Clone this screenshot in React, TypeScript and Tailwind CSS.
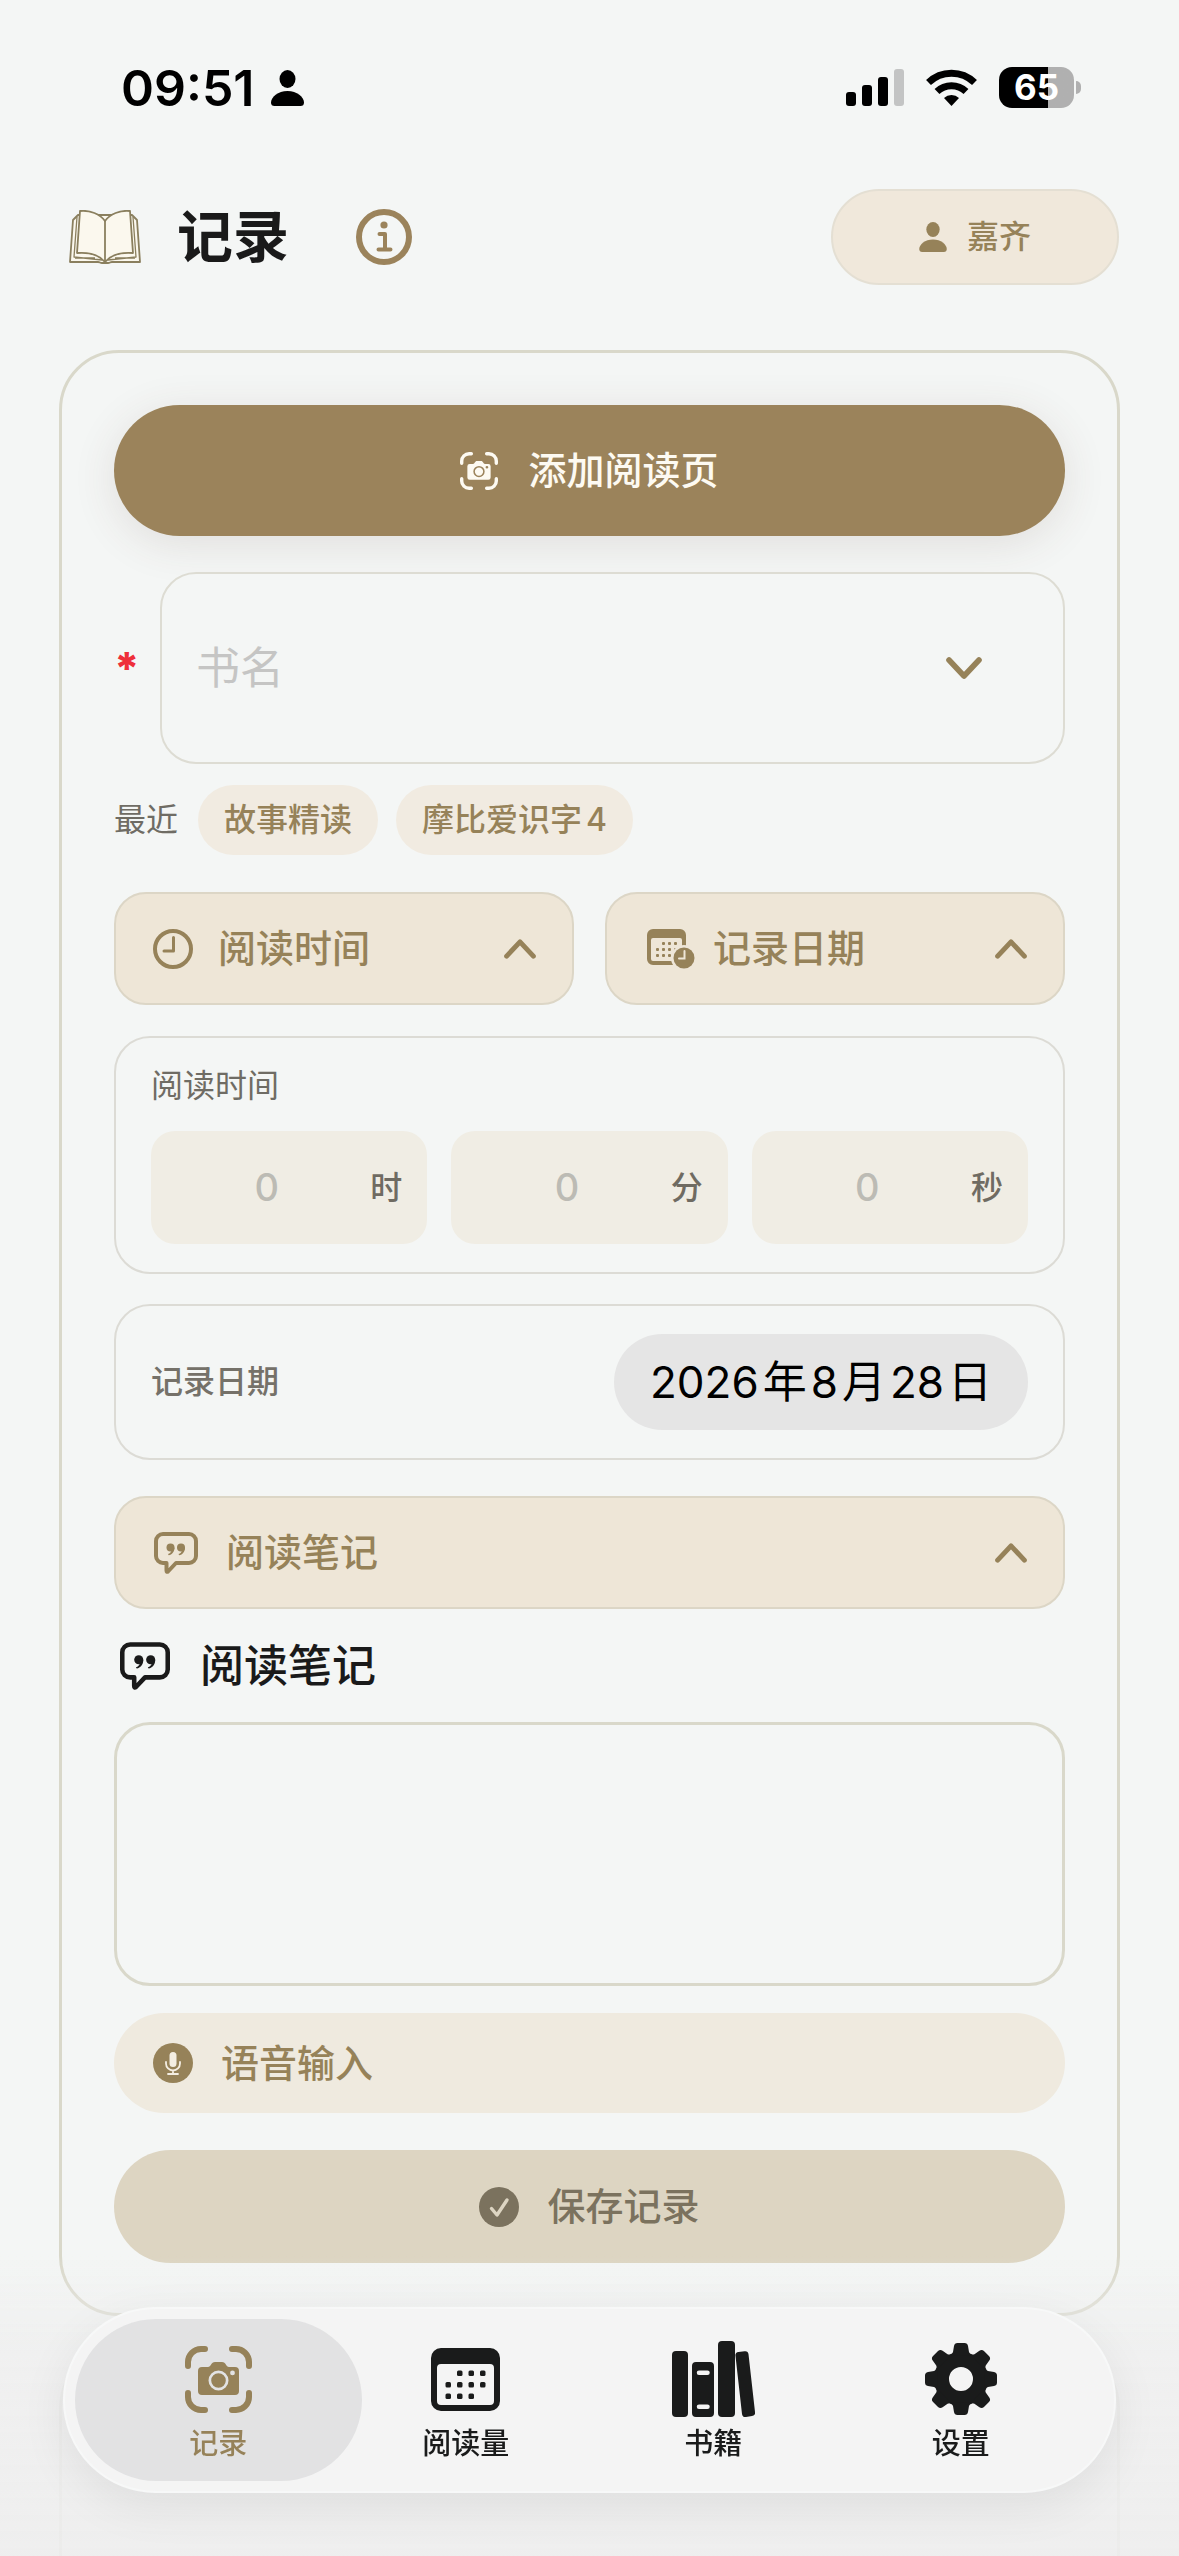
import type { ReactNode } from 'react';

type IconProps = { className?: string };

const PersonIcon = ({ className }: IconProps) => (
  <svg viewBox="0 0 33 36" fill="currentColor" className={className} aria-hidden="true">
    <ellipse cx="16.5" cy="9" rx="8" ry="9" />
    <path d="M16.5 21C26 21 33 27 33 32.5c0 2.500-1.200 3.500-3.500 3.500h-26C1.200 36 0 35 0 32.500 0 27 7 21 16.500 21Z" />
  </svg>
);

const SignalIcon = ({ className }: IconProps) => (
  <svg viewBox="0 0 58 37" fill="currentColor" className={className} aria-hidden="true">
    <rect x="0" y="23" width="10" height="14" rx="3" />
    <rect x="16" y="16" width="10" height="21" rx="3" />
    <rect x="32" y="8" width="10" height="29" rx="3" />
    <rect x="48" y="0" width="10" height="37" rx="3" opacity="0.2" />
  </svg>
);

const WifiIcon = ({ className }: IconProps) => (
  <svg viewBox="0 0 51 37" className={className} aria-hidden="true">
    <g fill="none" stroke="currentColor" strokeWidth="7">
      <path d="M2.500 13.500a33 33 0 0 1 46 0" />
      <path d="M11 22.500a21 21 0 0 1 29 0" />
    </g>
    <path d="M25.500 37 18 29a11 11 0 0 1 15 0Z" fill="currentColor" />
  </svg>
);

const BookIcon = ({ className }: IconProps) => (
  <svg
    viewBox="0 0 72 54"
    fill="#fbf8ee"
    stroke="#8a7f5e"
    strokeWidth="1.800"
    strokeLinejoin="round"
    className={className}
    aria-hidden="true"
  >
    <path d="M9 5 4 10 1 52h28c2 0 2 1 4 1h6c2 0 2-1 4-1h28L68 10l-5-5Z" />
    <path d="M8 7 5 47l28 3M64 7l3 40-28 3M6 48h20M66 48H46" fill="none" strokeWidth="1.300" />
    <path d="M11 1c10-1 20 3 25 10 5-7 15-11 25-10l3 42c-12-1-22 2-28 9-6-7-16-10-28-9Z" />
    <path d="M36 11v41" />
  </svg>
);

const InfoIcon = ({ className }: IconProps) => (
  <svg viewBox="0 0 56 56" fill="none" stroke="currentColor" className={className} aria-hidden="true">
    <circle cx="28" cy="28" r="25" strokeWidth="6" />
    <circle cx="28" cy="16" r="3.600" fill="currentColor" stroke="none" />
    <path d="M23.500 25H29v15M22.500 40.500h12" strokeWidth="4" strokeLinecap="round" strokeLinejoin="round" />
  </svg>
);

const ChevronIcon = ({ className }: IconProps) => (
  <svg viewBox="0 0 36 22" className={className} aria-hidden="true">
    <path
      d="M3 19 18 3l15 16"
      fill="none"
      stroke="currentColor"
      strokeWidth="5.600"
      strokeLinecap="round"
      strokeLinejoin="round"
    />
  </svg>
);

const ScanCameraIcon = ({ className }: IconProps) => (
  <svg viewBox="0 0 67 67" className={className} aria-hidden="true">
    <path
      d="M3 20v-4A13 13 0 0 1 16 3h4M47 3h4a13 13 0 0 1 13 13v4M64 47v4a13 13 0 0 1-13 13h-4M20 64h-4A13 13 0 0 1 3 51v-4"
      fill="none"
      stroke="currentColor"
      strokeWidth="6"
      strokeLinecap="round"
    />
    <path
      fill="currentColor"
      fillRule="evenodd"
      d="M17 21h6c3 0 3-5 7-5h7c4 0 4 5 7 5h6a4 4 0 0 1 4 4v20a4 4 0 0 1-4 4H17a4 4 0 0 1-4-4V25a4 4 0 0 1 4-4Z
        M33.500 24.500a10 10 0 1 0 0 20 10 10 0 0 0 0-20ZM33.500 27.200a7.300 7.300 0 1 1 0 14.600 7.300 7.300 0 0 1 0-14.600Z
        M47.500 24.500a2.400 2.400 0 1 0 0 4.800 2.400 2.400 0 0 0 0-4.800Z"
    />
  </svg>
);

const ClockIcon = ({ className }: IconProps) => (
  <svg viewBox="0 0 40 40" fill="none" stroke="currentColor" className={className} aria-hidden="true">
    <circle cx="20" cy="20" r="18" strokeWidth="4" />
    <path d="M20.500 8.500V22H11" strokeWidth="3" strokeLinecap="round" strokeLinejoin="round" />
  </svg>
);

const calendarDots = [
  [1, 0], [2, 0], [3, 0],
  [0, 1], [1, 1], [2, 1], [3, 1],
  [0, 2], [1, 2], [2, 2],
];

const CalendarIcon = ({ className }: IconProps) => (
  <svg viewBox="0 0 69 63" fill="currentColor" className={className} aria-hidden="true">
    <path
      fillRule="evenodd"
      d="M10 0h49a10 10 0 0 1 10 10v43a10 10 0 0 1-10 10H10A10 10 0 0 1 0 53V10A10 10 0 0 1 10 0ZM10 16a4 4 0 0 0-4 4v33a4 4 0 0 0 4 4h49a4 4 0 0 0 4-4V20a4 4 0 0 0-4-4Z"
    />
    {calendarDots.map(([col, row]) => (
      <rect key={`${col}-${row}`} x={14.5 + col * 11.5} y={22.5 + row * 11.5} width="5.500" height="5.500" rx="1.500" />
    ))}
  </svg>
);

const CalendarClockIcon = ({ className }: IconProps) => (
  <svg viewBox="0 0 48 40" fill="currentColor" className={className} aria-hidden="true">
    <path
      fillRule="evenodd"
      d="M6 0h27a6 6 0 0 1 6 6v24a6 6 0 0 1-6 6H6a6 6 0 0 1-6-6V6a6 6 0 0 1 6-6ZM6 9a2 2 0 0 0-2 2v19a2 2 0 0 0 2 2h27a2 2 0 0 0 2-2V11a2 2 0 0 0-2-2Z"
    />
    {calendarDots.map(([col, row]) => (
      <rect key={`${col}-${row}`} x={9 + col * 6} y={13 + row * 6} width="3" height="3" rx="1" />
    ))}
    <circle cx="37" cy="29" r="13" fill="#eee6d8" />
    <circle cx="37" cy="29" r="10.500" />
    <path d="M37.500 22v7.500H32" fill="none" stroke="#eee6d8" strokeWidth="2" strokeLinecap="round" />
  </svg>
);

const QuoteBubbleIcon = ({ className }: IconProps) => (
  <svg viewBox="0 0 44 42" className={className} aria-hidden="true">
    <path
      d="M9 2h26a7 7 0 0 1 7 7v15a7 7 0 0 1-7 7H22l-8 8.500q-1.500 1-1.500-1V31H9a7 7 0 0 1-7-7V9a7 7 0 0 1 7-7Z"
      fill="none"
      stroke="currentColor"
      strokeWidth="4"
      strokeLinejoin="round"
    />
    <g fill="currentColor">
      <circle cx="16.500" cy="15.500" r="4" />
      <path d="M20.500 15.500c0 4.500-2.500 7-5.800 7.800l-.7-1.200c2-.8 3-1.800 3.400-3.400Z" />
      <circle cx="27" cy="15.500" r="4" />
      <path d="M31 15.500c0 4.500-2.500 7-5.800 7.800l-.7-1.200c2-.8 3-1.800 3.400-3.400Z" />
    </g>
  </svg>
);

const MicIcon = ({ className }: IconProps) => (
  <svg viewBox="0 0 40 40" className={className} aria-hidden="true">
    <circle cx="20" cy="20" r="20" fill="currentColor" />
    <rect x="16.500" y="9" width="7" height="15" rx="3.500" fill="#f4eee3" />
    <path
      d="M13 19v1.500a7 7 0 0 0 14 0V19M20 27.500v3.500M15 31h10"
      fill="none"
      stroke="#f4eee3"
      strokeWidth="1.800"
      strokeLinecap="round"
    />
  </svg>
);

const CheckIcon = ({ className }: IconProps) => (
  <svg viewBox="0 0 40 40" className={className} aria-hidden="true">
    <circle cx="20" cy="20" r="20" fill="currentColor" />
    <path
      d="m12.500 21.500 5.500 6.500 10-15"
      fill="none"
      stroke="#ddd5c2"
      strokeWidth="3.400"
      strokeLinecap="round"
      strokeLinejoin="round"
    />
  </svg>
);

const BooksIcon = ({ className }: IconProps) => (
  <svg viewBox="0 0 83 76" fill="currentColor" className={className} aria-hidden="true">
    <rect x="0" y="10" width="16" height="66" rx="4" />
    <path
      fillRule="evenodd"
      d="M24 21h14a4 4 0 0 1 4 4v47a4 4 0 0 1-4 4H24a4 4 0 0 1-4-4V25a4 4 0 0 1 4-4ZM27 29.500a2 2 0 0 0 0 4.500h8.500a2 2 0 0 0 0-4.500ZM27 63.500a2 2 0 0 0 0 4.500h8.500a2 2 0 0 0 0-4.500Z"
    />
    <rect x="46" y="0" width="17" height="76" rx="4" />
    <path d="M63.500 15a3.500 3.500 0 0 1 3-4l6-.8a3.500 3.500 0 0 1 4 3L83 71a3.500 3.500 0 0 1-3 4l-6 .9a3.500 3.500 0 0 1-4-3Z" />
  </svg>
);

const GearIcon = ({ className }: IconProps) => (
  <svg viewBox="0 0 72 72" className={className} aria-hidden="true">
    <circle cx="36" cy="36" r="19.500" fill="none" stroke="currentColor" strokeWidth="15" />
    {[0, 45, 90, 135, 180, 225, 270, 315].map((angle) => (
      <path
        key={angle}
        d="M26 12.500 28 9l1-6q.5-3 3.500-3h7q3 0 3.500 3l1 6 2 3.500Z"
        fill="currentColor"
        transform={`rotate(${angle} 36 36)`}
      />
    ))}
  </svg>
);

const StatusBar = () => (
  <div className="flex h-[175px] items-center justify-between pl-[121px] pr-[98px] text-black">
    <div className="flex items-center gap-4">
      <span className="text-[50px] leading-none font-semibold">09:51</span>
      <PersonIcon className="h-9 w-[33px]" />
    </div>
    <div className="flex items-center gap-[22px]">
      <SignalIcon className="h-[37px] w-[58px]" />
      <WifiIcon className="h-[37px] w-[51px]" />
      <div className="flex items-center gap-[2px]">
        <div className="flex h-[41px] w-[75px] items-center justify-center rounded-[13px] bg-linear-to-r from-black from-65% to-[#b0b0b0] to-65%">
          <span className="text-[35px] leading-none font-bold text-white">65</span>
        </div>
        <div className="h-[13px] w-[5px] rounded-r-full bg-[#b0b0b0]" />
      </div>
    </div>
  </div>
);

type ToggleProps = { icon: ReactNode; label: string; className?: string };

const SectionToggle = ({ icon, label, className = '' }: ToggleProps) => (
  <button
    type="button"
    aria-expanded="true"
    className={`flex h-[113px] items-center rounded-[32px] border-2 border-[#dcd6c6] bg-[#eee6d7] pr-9 text-[38px] font-medium text-[#968259] ${className}`}
  >
    {icon}
    <span>{label}</span>
    <ChevronIcon className="ml-auto h-5 w-8" />
  </button>
);

const timeFields = [
  { id: 'hours', unit: '时' },
  { id: 'minutes', unit: '分' },
  { id: 'seconds', unit: '秒' },
];

const tabs = [
  { label: '记录', icon: <ScanCameraIcon className="size-[67px]" />, active: true },
  { label: '阅读量', icon: <CalendarIcon className="h-[63px] w-[69px]" />, active: false },
  { label: '书籍', icon: <BooksIcon className="h-[76px] w-[83px]" />, active: false },
  { label: '设置', icon: <GearIcon className="size-[72px]" />, active: false },
];

const App = () => {
  return (
    <div className="flex min-h-screen flex-col bg-[#f4f6f5] font-['Inter','Noto_Sans_CJK_SC',sans-serif] text-[#1a1a1a]">
      <StatusBar />

      <header className="mt-[14px] flex items-center pl-[69px] pr-[60px]">
        <BookIcon className="h-[54px] w-[72px]" />
        <h1 className="ml-9 text-[56px] leading-none font-bold">记录</h1>
        <button type="button" aria-label="说明" className="ml-[67px] text-[#9b835b]">
          <InfoIcon className="size-14" />
        </button>
        <button
          type="button"
          className="ml-auto flex h-24 w-[288px] items-center justify-center gap-5 rounded-full border-2 border-[#e4dfd3] bg-[#f0e8db] text-[32px] font-medium text-[#968259]"
        >
          <PersonIcon className="h-[30px] w-7" />
          嘉齐
        </button>
      </header>

      <main className="mt-[65px] flex flex-1 flex-col px-[59px]">
        <section className="rounded-[60px] border-3 border-[#d9d8ca] px-[52px] pt-[52px] pb-[50px]">
          <button
            type="button"
            className="flex h-[131px] w-full items-center justify-center gap-[30px] rounded-full bg-[#9b835b] text-[38px] font-medium text-[#fdfaf2] shadow-[0_8px_44px_rgba(90,60,50,0.12)]"
          >
            <ScanCameraIcon className="size-[38px]" />
            添加阅读页
          </button>

          <div className="mt-9 flex items-center">
            <label htmlFor="book" className="w-[46px] text-[44px] leading-10 font-extrabold text-[#ee2f3a]">
              *
            </label>
            <div className="flex h-48 flex-1 items-center rounded-[36px] border-2 border-[#dddcd3] bg-[#f4f6f5] pl-[34px] pr-[81px]">
              <input
                id="book"
                type="text"
                placeholder="书名"
                className="min-w-0 flex-1 bg-transparent text-[44px] outline-none placeholder:text-[#c5c5c4]"
              />
              <button type="button" aria-label="选择书籍" className="text-[#968259]">
                <ChevronIcon className="h-[22px] w-9 rotate-180" />
              </button>
            </div>
          </div>

          <div className="mt-[21px] flex h-[70px] items-center text-[32px]">
            <span className="mr-5 text-[#6f6c64]">最近</span>
            <button type="button" className="mr-[18px] h-full rounded-full bg-[#f1ebe1] px-[26px] font-medium text-[#968259]">
              故事精读
            </button>
            <button type="button" className="h-full rounded-full bg-[#f1ebe1] px-[26px] font-medium text-[#968259]">
              摩比爱识字<span className="ml-1">4</span>
            </button>
          </div>

          <div className="mt-[37px] grid grid-cols-2 gap-[31px]">
            <SectionToggle
              icon={<ClockIcon className="mr-[25px] size-10" />}
              label="阅读时间"
              className="pl-[37px]"
            />
            <SectionToggle
              icon={<CalendarClockIcon className="mr-[18px] h-10 w-12" />}
              label="记录日期"
              className="pl-10"
            />
          </div>

          <div className="mt-[31px] rounded-[36px] border-2 border-[#dcdbd5] px-[35px] pt-[26px] pb-7">
            <h2 className="text-[32px] leading-[44px] text-[#6f6c64]">阅读时间</h2>
            <div className="mt-[23px] grid grid-cols-3 gap-6">
              {timeFields.map((field) => (
                <div key={field.id} className="flex h-[113px] items-center gap-3 rounded-[24px] bg-[#f0ede4] pl-6 pr-[25px]">
                  <input
                    id={field.id}
                    type="text"
                    inputMode="numeric"
                    placeholder="0"
                    className="w-0 min-w-0 flex-1 bg-transparent text-center text-[38px] font-medium outline-none placeholder:text-[#bcbbb4]"
                  />
                  <label htmlFor={field.id} className="text-[32px] font-medium text-[#6f6b62]">
                    {field.unit}
                  </label>
                </div>
              ))}
            </div>
          </div>

          <div className="mt-[30px] flex h-[156px] items-center justify-between rounded-[36px] border-2 border-[#dcdbd5] px-[35px]">
            <label htmlFor="date" className="text-[32px] font-medium text-[#757169]">
              记录日期
            </label>
            <button id="date" type="button" className="h-24 rounded-full bg-[#e5e5e5] px-9 text-[44px] text-black">
              <span className="mr-1">2026</span>年<span className="mx-1">8</span>月<span className="mx-1">28</span>日
            </button>
          </div>

          <SectionToggle
            icon={<QuoteBubbleIcon className="mr-7 h-[42px] w-11" />}
            label="阅读笔记"
            className="mt-9 w-full pl-[38px]"
          />

          <label htmlFor="notes" className="flex h-[113px] items-center gap-[30px] pl-[6px] text-[44px] font-medium">
            <QuoteBubbleIcon className="h-12 w-[50px]" />
            阅读笔记
          </label>
          <textarea
            id="notes"
            className="block h-[264px] w-full resize-none rounded-[36px] border-3 border-[#d9d8ca] bg-transparent p-8 text-[38px] outline-none"
          />

          <button
            type="button"
            className="mt-[27px] flex h-[100px] w-full items-center gap-7 rounded-full bg-[#efeadf] pl-[39px] text-[38px] font-medium text-[#968259]"
          >
            <MicIcon className="size-10" />
            语音输入
          </button>

          <button
            type="button"
            className="mt-[37px] flex h-[113px] w-full items-center justify-center gap-7 rounded-full bg-[#ddd5c2] text-[38px] font-medium text-[#7b725e]"
          >
            <CheckIcon className="size-10" />
            保存记录
          </button>
        </section>

        <section className="mt-[31px] flex-1 rounded-t-[60px] border-3 border-b-0 border-[#e6e6e2]" />
      </main>

      <div className="pointer-events-none fixed inset-x-0 bottom-0 h-[300px] bg-linear-to-b from-[#eeeeee]/0 via-[#eeeeee]/75 via-30% to-[#ededed]/80" />

      <nav className="fixed inset-x-[63px] bottom-[63px] flex h-[186px] rounded-full border-2 border-[#f7f8f8] bg-[#f4f4f4] p-[10px] shadow-[0_14px_48px_rgba(0,0,0,0.07)]">
        {tabs.map((tab) => (
          <a
            key={tab.label}
            href="#"
            aria-current={tab.active ? 'page' : undefined}
            className={`-ml-[39px] flex flex-1 flex-col items-center rounded-full first:ml-0 ${
              tab.active ? 'bg-[#e2e2e3] text-[#968259]' : 'text-[#1a1b1b]'
            }`}
          >
            <span className="mt-5 flex h-20 items-center">{tab.icon}</span>
            <span className="mt-[5px] text-[29px] leading-10 font-medium">{tab.label}</span>
          </a>
        ))}
      </nav>
    </div>
  );
};

export default App;
